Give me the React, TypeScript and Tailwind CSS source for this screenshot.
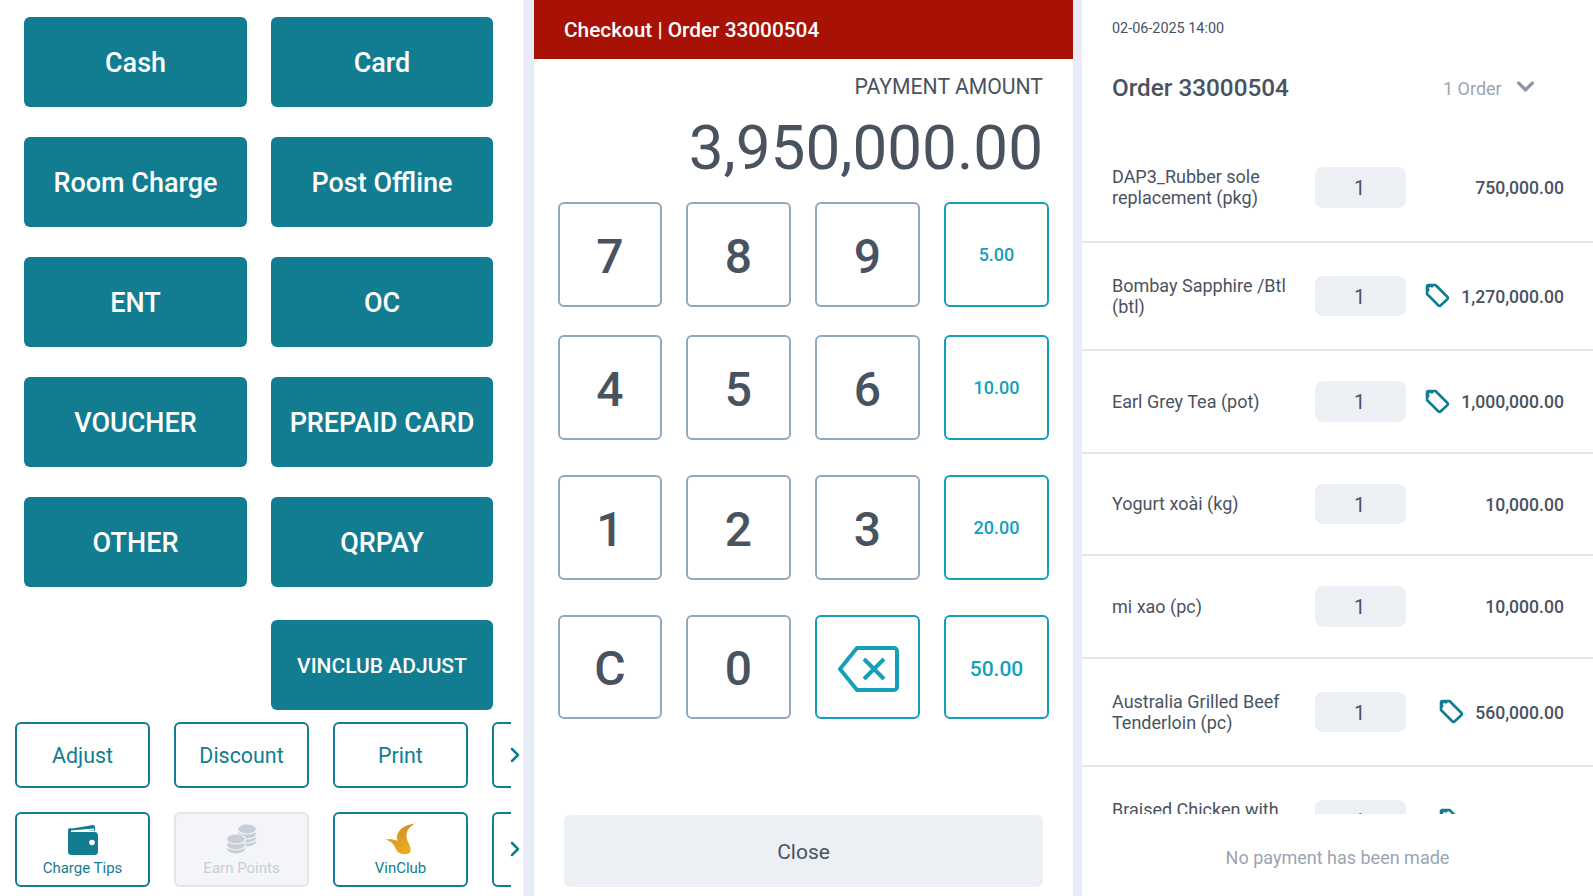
import React from "react";
import { ChevronDown, ChevronRight } from "lucide-react";

const payMethods = ["Cash", "Card", "Room Charge", "Post Offline", "ENT", "OC", "VOUCHER", "PREPAID CARD", "OTHER", "QRPAY"];

const keys = [
  ["7", "8", "9", "5.00"],
  ["4", "5", "6", "10.00"],
  ["1", "2", "3", "20.00"],
  ["C", "0", "back", "50.00"],
];

const items = [
  { name: "DAP3_Rubber sole replacement (pkg)", price: "750,000.00", tag: false },
  { name: "Bombay Sapphire /Btl (btl)", price: "1,270,000.00", tag: true },
  { name: "Earl Grey Tea (pot)", price: "1,000,000.00", tag: true },
  { name: "Yogurt xoài (kg)", price: "10,000.00", tag: false },
  { name: "mi xao (pc)", price: "10,000.00", tag: false },
  { name: "Australia Grilled Beef Tenderloin (pc)", price: "560,000.00", tag: true },
  { name: "Braised Chicken with Mushroom (pc)", price: "340,000.00", tag: true },
];

const TagIcon = () => (
  <svg width="25" height="25" viewBox="0 0 25 25" className="shrink-0">
    <path d="M2 3.5 A1.5 1.5 0 0 1 3.5 2 H10.5 L22.5 14 A1.5 1.5 0 0 1 22.5 16 L15.5 22.5 A1.5 1.5 0 0 1 13.5 22.5 L2 11 Z" fill="none" stroke="#127d91" strokeWidth="2.6" strokeLinejoin="round" />
    <path d="M2 3.5 A1.5 1.5 0 0 1 3.5 2 H10 L2 10 Z" fill="#127d91" />
    <circle cx="5.5" cy="5.5" r="1.5" fill="#ffffff" />
  </svg>
);

const BackspaceIcon = () => (
  <svg width="62" height="46" viewBox="0 0 62 46" fill="none" stroke="#15a0b9" strokeWidth="4" strokeLinejoin="round" strokeLinecap="butt">
    <path d="M19 2 H56 A3 3 0 0 1 59 5 V41 A3 3 0 0 1 56 44 H19 L2 23 Z" />
    <path d="M26 13 L46 33 M46 13 L26 33" />
  </svg>
);

const WalletIcon = () => (
  <svg width="30" height="31" viewBox="0 0 30 31">
    <path d="M1 5 L25 1 Q27 1 27 3 V7 H1 Z" fill="#127d91" />
    <path d="M3 6.4 L26 4.4 V6.4 L3 8 Z" fill="#ffffff" />
    <rect x="0" y="8" width="30" height="23" rx="3.5" fill="#127d91" />
    <path d="M0 9 V6 Q0 4 3 4 V10 H0 Z" fill="#127d91" />
    <circle cx="24" cy="18.5" r="2.8" fill="#ffffff" />
  </svg>
);

const Coin = ({ x, y }: { x: number; y: number }) => (
  <ellipse cx={x} cy={y} rx="9.5" ry="5" fill="#c6ced8" stroke="#f4f5f8" strokeWidth="1.2" />
);

const CoinsIcon = () => (
  <svg width="32" height="32" viewBox="0 0 32 32">
    <Coin x={21} y={19} />
    <Coin x={21} y={15} />
    <Coin x={21} y={11} />
    <Coin x={21} y={6} />
    <Coin x={10} y={26} />
    <Coin x={10} y={22} />
    <Coin x={10} y={16} />
  </svg>
);

const VinClubLogo = () => (
  <svg width="31" height="32" viewBox="0 0 31 32">
    <defs>
      <linearGradient id="vinFlame" x1="0" y1="0" x2="0.5" y2="1">
        <stop offset="0" stopColor="#c98a2a" />
        <stop offset="1" stopColor="#edaa20" />
      </linearGradient>
    </defs>
    <path d="M30 0.5 C22 1 13 6 12 13 C11.5 15 12 16.5 12.5 18 C9 16 5 15.8 0.5 16.5 C5 18 8 20 10 24 C11 28 14 32 22 31 C27 30.5 26 25 24 21 C20 14 20 6 30 0.5 Z" fill="url(#vinFlame)" />
  </svg>
);

const OutlineButton = ({ children, disabled, className }: { children: React.ReactNode; disabled?: boolean; className?: string }) => (
  <button
    className={
      disabled
        ? "w-[135px] h-full shrink-0 rounded-md border-2 border-[#e2e6ec] bg-[#f4f5f8] text-[#c6ced8] flex flex-col items-center justify-center " + (className || "")
        : "w-[135px] h-full shrink-0 rounded-md border-2 border-[#127d91] bg-white text-[#127d91] flex flex-col items-center justify-center " + (className || "")
    }
  >
    {children}
  </button>
);

const App = () => {
  return (
    <div className="flex h-[896px] w-[1593px] overflow-hidden bg-[#e8ecf8] font-['Roboto',sans-serif]">
      {/* payment methods */}
      <div className="w-[523px] shrink-0 bg-white pl-[15px] pt-[17px]">
        <div className="ml-[9px] grid w-[470px] grid-cols-[223px_222px] gap-x-[24px] gap-y-[30px]">
          {payMethods.map((m) => (
            <button key={m} className="h-[90px] rounded-md bg-[#127d91] pt-[2px] text-[27px] font-medium text-white">
              {m}
            </button>
          ))}
          <div />
          <button className="mt-[3px] h-[90px] rounded-md bg-[#127d91] pt-[3px] text-[21px] font-medium text-white">VINCLUB ADJUST</button>
        </div>

        <div className="mt-[12px] flex h-[66px] gap-[24px]">
          <OutlineButton className="pt-[3px] text-[21.4px]">Adjust</OutlineButton>
          <OutlineButton className="pt-[3px] text-[21.4px]">Discount</OutlineButton>
          <OutlineButton className="pt-[3px] text-[21.4px]">Print</OutlineButton>
          <div className="relative h-full w-[19px] shrink-0">
            <div className="h-full w-[30px] rounded-l-md border-y-2 border-l-2 border-[#127d91]" style={{ clipPath: "inset(0 11px 0 0)" }} />
            <ChevronRight className="absolute left-[11px] top-[21px] text-[#127d91]" size={24} strokeWidth={2.5} />
          </div>
        </div>

        <div className="mt-[24px] flex h-[75px] gap-[24px]">
          <OutlineButton className="pt-[2px]">
            <WalletIcon />
            <span className="mt-[3px] text-[15px] leading-[20px]">Charge Tips</span>
          </OutlineButton>
          <OutlineButton disabled className="pt-[2px]">
            <CoinsIcon />
            <span className="mt-[3px] text-[15px] leading-[20px]">Earn Points</span>
          </OutlineButton>
          <OutlineButton className="pt-[2px]">
            <VinClubLogo />
            <span className="mt-[3px] text-[15px] leading-[20px]">VinClub</span>
          </OutlineButton>
          <div className="relative h-full w-[19px] shrink-0">
            <div className="h-full w-[30px] rounded-l-md border-y-2 border-l-2 border-[#127d91]" style={{ clipPath: "inset(0 11px 0 0)" }} />
            <ChevronRight className="absolute left-[11px] top-[25px] text-[#127d91]" size={24} strokeWidth={2.5} />
          </div>
        </div>
      </div>

      {/* checkout keypad */}
      <div className="ml-[11px] flex w-[539px] shrink-0 flex-col bg-white">
        <div className="flex h-[59px] items-center bg-[#a81105] pl-[30px] pt-[2px] text-[20.8px] font-medium text-white">
          Checkout | Order 33000504
        </div>
        <div className="pr-[30px] pt-[14px] text-right text-[#49535f]">
          <div className="text-[21.2px] leading-[28px]">PAYMENT AMOUNT</div>
          <div className="mt-[9px] text-[62px] leading-[75px]">3,950,000.00</div>
        </div>
        <div className="ml-[24px] mt-[17px] grid grid-cols-[104px_105px_105px_105px] grid-rows-[133px_140px_139.5px_104.5px] gap-x-[24px]">
          {keys.flat().map((k) => {
            const accent = k.includes(".") || k === "back";
            return (
              <button
                key={k}
                className={
                  accent
                    ? "flex h-[104.5px] items-center justify-center rounded-md border-2 border-[#15a0b9] pt-[1px] text-[#15a0b9]"
                    : "flex h-[104.5px] items-center justify-center rounded-md border-2 border-[#90a9bf] pt-[5px] text-[48px] font-medium text-[#49535f]"
                }
              >
                {k === "back" ? <span className="flex pt-[3px] pl-[2px]"><BackspaceIcon /></span> : k === "50.00" ? <span className="pt-[4px] text-[21px] font-medium">{k}</span> : k.includes(".") ? <span className="text-[18px] font-medium">{k}</span> : k}
              </button>
            );
          })}
        </div>
        <button className="mx-[30px] mt-[95.5px] h-[72px] rounded-md bg-[#ecf0f4] pt-[4px] text-[21px] text-[#49535f]">Close</button>
      </div>

      {/* order summary */}
      <div className="ml-[9px] flex w-[511px] shrink-0 flex-col bg-white">
        <div className="pl-[30px] pt-[19px]">
          <div className="text-[14.4px] leading-[20px] text-[#49535f]">02-06-2025 14:00</div>
          <div className="mt-[31px] flex items-center">
            <span className="w-[331px] text-[24.3px] font-medium leading-[36px] text-[#49535f]">Order 33000504</span>
            <span className="text-[18px] text-[#9aa5b1]">1 Order</span>
            <ChevronDown className="ml-[10px] -mt-[4px] text-[#8a96a3]" size={27} strokeWidth={3} />
          </div>
        </div>
        <div className="mt-[28px] min-h-0 flex-1 overflow-hidden">
          {items.map((item) => (
            <div key={item.name} className="flex items-center border-b-2 border-[#e2e6ec] py-[30px] pl-[30px] pr-[29px]">
              <div className="w-[203px] shrink-0 py-[2.25px] text-[18px] leading-[21px] text-[#49535f]">{item.name}</div>
              <div className="flex h-[40.5px] w-[91px] shrink-0 items-center justify-center rounded-lg bg-[#ecf0f4] pt-[2px] pr-[2px] text-[20px] text-[#49535f]">1</div>
              <div className="flex flex-1 items-center justify-end gap-[11px] text-[17.6px] font-medium text-[#49535f]">
                {item.tag && <TagIcon />}
                <span className="pt-[2px]">{item.price}</span>
              </div>
            </div>
          ))}
        </div>
        <div className="flex h-[82px] shrink-0 items-center justify-center pt-[4px] text-[18px] text-[#9aa5b1]">No payment has been made</div>
      </div>
    </div>
  );
};

export default App;
